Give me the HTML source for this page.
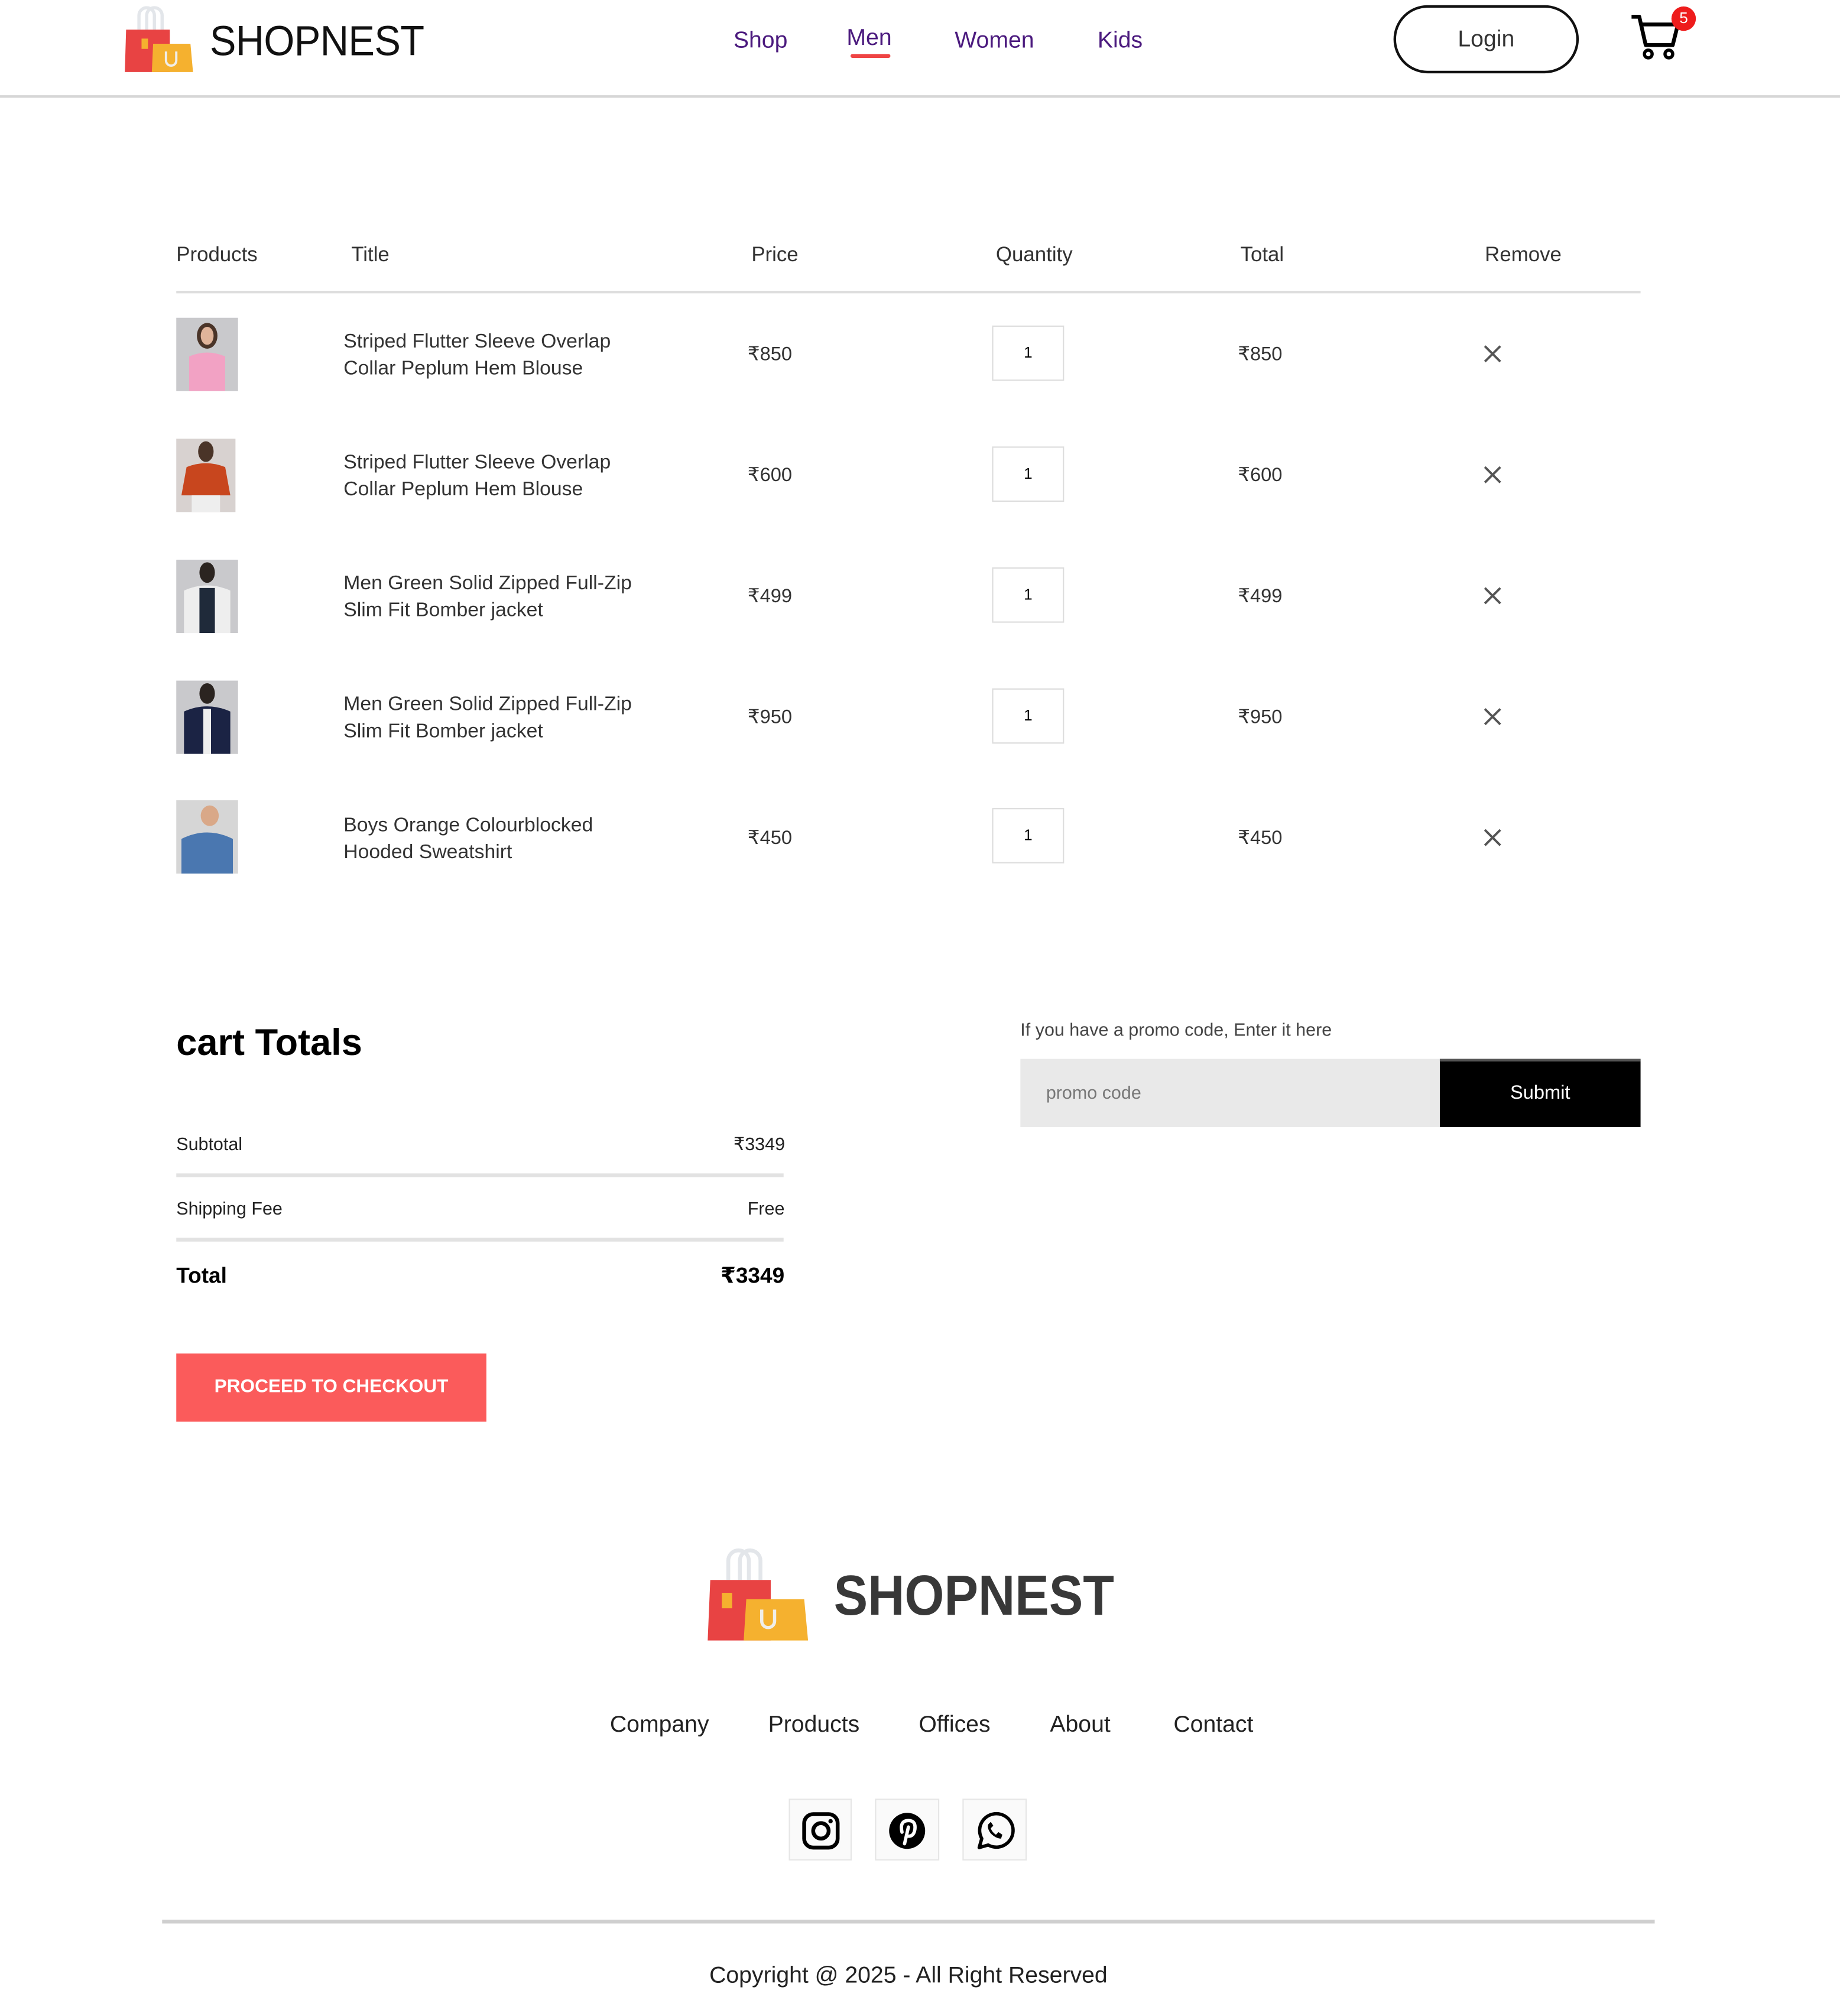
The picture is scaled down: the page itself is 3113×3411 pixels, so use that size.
<!DOCTYPE html>
<html><head><meta charset="utf-8">
<style>
html,body{margin:0;padding:0;background:#fff;overflow:hidden}
body{width:3113px;height:3410px}
#w{position:absolute;left:0;top:0;width:1430px;height:1567px;transform:scale(2.17692);transform-origin:0 0;font-family:"Liberation Sans","DejaVu Sans",sans-serif;color:#333}
.a{position:absolute;white-space:nowrap}
.nav{color:#4b1a7e;font-size:18px}
.th{font-size:16px;color:#333;top:190px}
.t{font-size:15.5px;line-height:21px;color:#333}
.p{font-size:15px;color:#333}
.q{position:absolute;width:56px;height:43px;border:1.5px solid #ddd;box-sizing:border-box;font-size:12px;color:#000;text-align:center;line-height:40px}
.img{position:absolute;width:48px;height:57px;background:#c9c9cc;overflow:hidden}
.fl{font-size:18px;color:#222;top:1330px}
.ib{position:absolute;top:1398px;width:48px;height:48px;background:#fafafa;border:1px solid #e6e6e6;box-sizing:border-box}
.ib svg{position:absolute;left:8px;top:8px}
</style></head><body><div id="w">
<svg class="a" style="left:94px;top:3px" width="60" height="56" viewBox="0 0 60 56">
<path d="M14 20 V9 a6 6 0 0 1 12 0 V20" fill="none" stroke="#e3e6ea" stroke-width="2.5"/>
<path d="M20 20 V9 a6 6 0 0 1 12 0 V20" fill="none" stroke="#e3e6ea" stroke-width="2.5"/>
<path d="M4 20 H38 V53 H3Z" fill="#e84343"/>
<rect x="16" y="27" width="5" height="8" fill="#f5b12f"/>
<path d="M25 31 H54 L56 53 H24Z" fill="#f5b12f"/>
<path d="M35 37 v7 a4 4 0 0 0 8 0 v-7" fill="none" stroke="#f0eee9" stroke-width="1.8"/>
</svg>
<div class="a" style="left:163px;top:13px;font-size:33px;color:#111;transform:scaleX(0.93);transform-origin:0 0;letter-spacing:-0.3px">SHOPNEST</div>
<div class="a nav" style="left:570px;top:21px">Shop</div>
<div class="a nav" style="left:658px;top:19px">Men</div>
<div class="a" style="left:661px;top:42px;width:31px;height:3px;border-radius:2px;background:#ef4444"></div>
<div class="a nav" style="left:742px;top:21px">Women</div>
<div class="a nav" style="left:853px;top:21px">Kids</div>
<div class="a" style="left:1083px;top:4px;width:144px;height:53px;border:2px solid #111;border-radius:28px;box-sizing:border-box;text-align:center;line-height:49px;font-size:18px;color:#333">Login</div>
<svg class="a" style="left:1266px;top:8px" width="42" height="40" viewBox="0 0 42 40">
<path d="M2 5 H8 L13 27 H34 L38 11 H10" fill="none" stroke="#000" stroke-width="3" stroke-linejoin="round"/>
<circle cx="15" cy="34" r="3" fill="none" stroke="#000" stroke-width="2.5"/><circle cx="31" cy="34" r="3" fill="none" stroke="#000" stroke-width="2.5"/>
</svg>
<div class="a" style="left:1299px;top:5px;width:19px;height:19px;border-radius:50%;background:#ee1c1c;color:#fff;font-size:12px;text-align:center;line-height:19px">5</div>
<div class="a" style="left:0;top:74px;width:1430px;height:2px;background:#d6d6d6"></div>

<div class="a th" style="left:137px">Products</div>
<div class="a th" style="left:273px">Title</div>
<div class="a th" style="left:584px">Price</div>
<div class="a th" style="left:774px">Quantity</div>
<div class="a th" style="left:964px">Total</div>
<div class="a th" style="left:1154px">Remove</div>
<div class="a" style="left:137px;top:226px;width:1138px;height:2px;background:#dedede"></div>

<div class="img" style="left:137px;top:247px"><svg width="48" height="57"><ellipse cx="24" cy="14" rx="8" ry="10" fill="#4a3428"/><ellipse cx="24" cy="14" rx="5" ry="7" fill="#e0b49a"/><path d="M10 30 Q24 24 38 30 V57 H10Z" fill="#f2a2c4"/></svg></div>
<div class="a t" style="left:267px;top:255px">Striped Flutter Sleeve Overlap<br>Collar Peplum Hem Blouse</div>
<div class="a p" style="left:581px;top:266px">₹850</div>
<div class="q" style="left:771px;top:253px">1</div>
<div class="a p" style="left:962px;top:266px">₹850</div>

<div class="img" style="left:137px;top:341px;width:46px;background:#d8d2d0"><svg width="46" height="57"><ellipse cx="23" cy="10" rx="6" ry="8" fill="#4a3428"/><path d="M8 22 Q23 16 38 22 L42 44 H4Z" fill="#c8461e"/><rect x="12" y="44" width="22" height="13" fill="#eee"/></svg></div>
<div class="a t" style="left:267px;top:349px">Striped Flutter Sleeve Overlap<br>Collar Peplum Hem Blouse</div>
<div class="a p" style="left:581px;top:360px">₹600</div>
<div class="q" style="left:771px;top:347px">1</div>
<div class="a p" style="left:962px;top:360px">₹600</div>

<div class="img" style="left:137px;top:435px"><svg width="48" height="57"><ellipse cx="24" cy="10" rx="6" ry="8" fill="#2b2420"/><path d="M6 24 Q24 16 42 24 V57 H6Z" fill="#eeeeee"/><rect x="18" y="22" width="12" height="35" fill="#1f2a3a"/></svg></div>
<div class="a t" style="left:267px;top:443px">Men Green Solid Zipped Full-Zip<br>Slim Fit Bomber jacket</div>
<div class="a p" style="left:581px;top:454px">₹499</div>
<div class="q" style="left:771px;top:441px">1</div>
<div class="a p" style="left:962px;top:454px">₹499</div>

<div class="img" style="left:137px;top:529px"><svg width="48" height="57"><ellipse cx="24" cy="10" rx="6" ry="8" fill="#2b2420"/><path d="M6 24 Q24 16 42 24 V57 H6Z" fill="#1b2344"/><rect x="21" y="22" width="6" height="35" fill="#eee"/></svg></div>
<div class="a t" style="left:267px;top:537px">Men Green Solid Zipped Full-Zip<br>Slim Fit Bomber jacket</div>
<div class="a p" style="left:581px;top:548px">₹950</div>
<div class="q" style="left:771px;top:535px">1</div>
<div class="a p" style="left:962px;top:548px">₹950</div>

<div class="img" style="left:137px;top:622px;background:#d6d6d6"><svg width="48" height="57"><ellipse cx="26" cy="12" rx="7" ry="8" fill="#d9a888"/><path d="M4 30 Q24 20 44 30 V57 H4Z" fill="#4a77b0"/></svg></div>
<div class="a t" style="left:267px;top:631px">Boys Orange Colourblocked<br>Hooded Sweatshirt</div>
<div class="a p" style="left:581px;top:642px">₹450</div>
<div class="q" style="left:771px;top:628px">1</div>
<div class="a p" style="left:962px;top:642px">₹450</div>

<svg class="a" style="left:1152px;top:268px" width="16" height="400" viewBox="0 0 16 400" stroke="#555" stroke-width="1.8">
<path d="M2 1 L14 13 M14 1 L2 13"/><path d="M2 95 L14 107 M14 95 L2 107"/><path d="M2 189 L14 201 M14 189 L2 201"/><path d="M2 283 L14 295 M14 283 L2 295"/><path d="M2 377 L14 389 M14 377 L2 389"/>
</svg>

<div class="a" style="left:137px;top:795px;font-size:29px;font-weight:bold;color:#000">cart Totals</div>
<div class="a" style="left:137px;top:881px;font-size:14px;color:#222">Subtotal</div>
<div class="a" style="left:570px;top:881px;font-size:14px;color:#222">₹3349</div>
<div class="a" style="left:137px;top:912px;width:472px;height:3px;background:#e2e2e2"></div>
<div class="a" style="left:137px;top:931px;font-size:14px;color:#222">Shipping Fee</div>
<div class="a" style="left:581px;top:931px;font-size:14px;color:#222">Free</div>
<div class="a" style="left:137px;top:962px;width:472px;height:3px;background:#e2e2e2"></div>
<div class="a" style="left:137px;top:982px;font-size:17px;font-weight:bold;color:#000">Total</div>
<div class="a" style="left:560px;top:982px;font-size:17px;font-weight:bold;color:#000">₹3349</div>
<div class="a" style="left:137px;top:1052px;width:241px;height:53px;background:#fb5b5b;color:#fff;font-weight:bold;font-size:14.5px;text-align:center;line-height:53px">PROCEED TO CHECKOUT</div>

<div class="a" style="left:793px;top:792px;font-size:14px;color:#444">If you have a promo code, Enter it here</div>
<div class="a" style="left:793px;top:823px;width:326px;height:53px;background:#e9e9e9"></div>
<div class="a" style="left:813px;top:841px;font-size:14px;color:#777">promo code</div>
<div class="a" style="left:1119px;top:823px;width:156px;height:53px;background:#000;border-top:2px solid #555;box-sizing:border-box;color:#fff;font-size:15px;text-align:center;line-height:50px">Submit</div>

<svg class="a" style="left:547px;top:1201px" width="82" height="76" viewBox="0 0 82 76">
<path d="M19 27 V12 a8 8 0 0 1 16 0 V27" fill="none" stroke="#e3e6ea" stroke-width="3"/>
<path d="M28 27 V12 a8 8 0 0 1 16 0 V27" fill="none" stroke="#e3e6ea" stroke-width="3"/>
<path d="M5 27 H52 V74 H3Z" fill="#e84343"/>
<rect x="14" y="37" width="8" height="12" fill="#f5b12f"/>
<path d="M33 42 H78 L81 74 H31Z" fill="#f5b12f"/>
<path d="M45 50 v9 a5 5 0 0 0 10 0 v-9" fill="none" stroke="#f0eee9" stroke-width="2.5"/>
</svg>
<div class="a" style="left:648px;top:1216px;font-size:44px;font-weight:bold;color:#383838;transform:scaleX(0.9);transform-origin:0 0">SHOPNEST</div>
<div class="a fl" style="left:474px">Company</div>
<div class="a fl" style="left:597px">Products</div>
<div class="a fl" style="left:714px">Offices</div>
<div class="a fl" style="left:816px">About</div>
<div class="a fl" style="left:912px">Contact</div>

<div class="ib" style="left:613px;width:49px"><svg width="32" height="32" viewBox="0 0 32 32"><rect x="3" y="3" width="26" height="26" rx="7" fill="none" stroke="#000" stroke-width="3"/><circle cx="16" cy="16" r="6" fill="none" stroke="#000" stroke-width="3"/><circle cx="23.5" cy="8.5" r="1.7"/></svg></div>
<div class="ib" style="left:680px;width:50px"><svg width="32" height="32" viewBox="0 0 32 32"><circle cx="16" cy="16" r="14"/><path d="M14 26 L17 13 M12 17 Q10 8 17 8 Q23 8 22 15 Q21 21 16 20" fill="none" stroke="#fff" stroke-width="2.6" stroke-linecap="round"/></svg></div>
<div class="ib" style="left:748px;width:50px"><svg width="32" height="32" viewBox="0 0 32 32"><path d="M4 29 L6 22 A13 13 0 1 1 11 27 Z" fill="none" stroke="#000" stroke-width="2.6" stroke-linejoin="round"/><path d="M11 11 Q10 14 13 18 Q17 22 21 22 L22 19 L19 17 L17 19 Q14 17 13 14 L15 12 L13 9 Z"/></svg></div>

<div class="a" style="left:126px;top:1492px;width:1160px;height:3px;background:#cfcfcf"></div>
<div class="a" style="left:0;width:1412px;text-align:center;top:1525px;font-size:18px;color:#222">Copyright @ 2025 - All Right Reserved</div>
</div></body></html>
